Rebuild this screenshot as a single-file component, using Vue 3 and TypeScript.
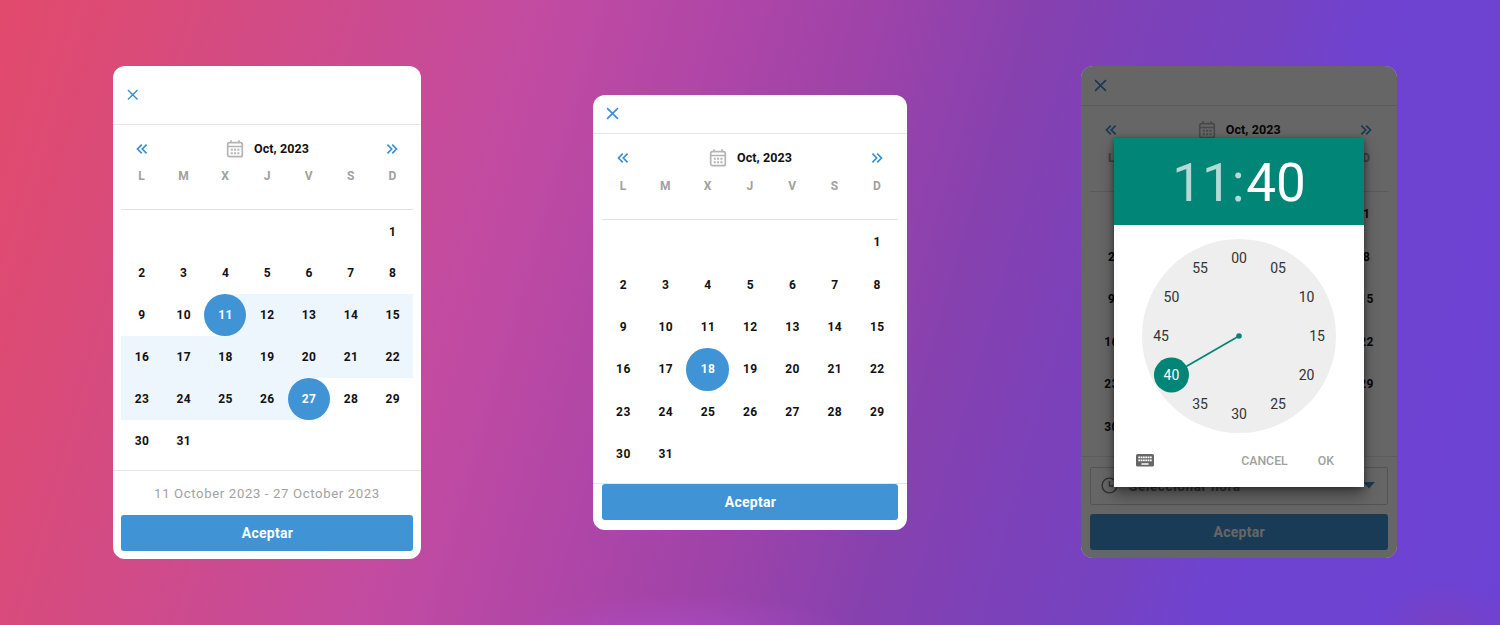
<script setup lang="ts">
interface CalendarCard {
  id: string
  start?: number
  end?: number
  summary?: string
  hour?: boolean
}

const cards: CalendarCard[] = [
  { id: 'range', start: 11, end: 27, summary: '11 October 2023 - 27 October 2023' },
  { id: 'single', start: 18, end: 18 },
  { id: 'time', hour: true },
]

const weekdays = ['L', 'M', 'X', 'J', 'V', 'S', 'D']
// October 2023 starts on a Sunday, so six cells stay blank.
const cells: (number | null)[] = [
  ...Array.from({ length: 6 }, () => null),
  ...Array.from({ length: 31 }, (_, i) => i + 1),
]

function cellClass(card: CalendarCard, day: number | null) {
  const { start, end } = card
  if (day === null || start === undefined || end === undefined) return {}
  const ranged = end > start
  return {
    between: ranged && day > start && day < end,
    first: ranged && day === start,
    last: ranged && day === end,
    picked: day === start || day === end,
  }
}

const minutes = Array.from({ length: 12 }, (_, i) => {
  const angle = (i * Math.PI) / 6
  return {
    label: String(i * 5).padStart(2, '0'),
    x: 97 + 78 * Math.sin(angle),
    y: 97 - 78 * Math.cos(angle),
    active: i === 8,
  }
})
</script>

<template>
  <main class="stage">
    <section v-for="card in cards" :key="card.id" class="card" :class="card.id">
      <header class="top">
        <svg class="close" viewBox="0 0 12 12"><path d="M1 1L11 11M11 1L1 11" /></svg>
      </header>

      <div class="nav">
        <svg class="arrow" viewBox="0 0 12 12"><path d="M5.8 1.6L1.5 6L5.8 10.4M10.6 1.6L6.3 6L10.6 10.4" /></svg>
        <div class="month">
          <svg class="cal" viewBox="0 0 18 18">
            <rect x="1.7" y="2.7" width="14.6" height="14" rx="1.8" />
            <path d="M1.7 6.5H16.3M5 .2V3M13 .2V3" />
            <path class="dots" d="M4.8 9.8H13.5M4.8 13.2H13.5" />
          </svg>
          <span>Oct, 2023</span>
        </div>
        <svg class="arrow" viewBox="0 0 12 12"><path d="M1.4 1.6L5.7 6L1.4 10.4M6.2 1.6L10.5 6L6.2 10.4" /></svg>
      </div>

      <div class="week">
        <span v-for="w in weekdays" :key="w">{{ w }}</span>
      </div>

      <div class="days">
        <div v-for="(day, i) in cells" :key="i" class="cell" :class="cellClass(card, day)">
          <span v-if="day">{{ day }}</span>
        </div>
      </div>

      <footer class="bottom">
        <p v-if="card.summary" class="summary">{{ card.summary }}</p>
        <div v-if="card.hour" class="select">
          <svg class="watch" viewBox="0 0 18 18"><circle cx="9" cy="9" r="7.8" /><path d="M9 4.2V9.6H13" /></svg>
          <span>Seleccionar hora</span>
          <svg class="caret" viewBox="0 0 12 7"><path d="M0 0H12L6 6.5Z" /></svg>
        </div>
        <button class="accept">Aceptar</button>
      </footer>

      <div v-if="card.hour" class="overlay">
        <div class="dialog">
          <div class="clock-head"><span class="dim">11:</span><span>40</span></div>
          <div class="face">
            <svg viewBox="0 0 194 194">
              <circle cx="97" cy="97" r="97" fill="#eeeeee" />
              <path d="M97 97L29.45 136" stroke="#008577" stroke-width="1.7" />
              <circle cx="97" cy="97" r="2.8" fill="#008577" />
              <circle cx="29.45" cy="136" r="17.5" fill="#008577" />
              <text
                v-for="m in minutes"
                :key="m.label"
                :x="m.x"
                :y="m.y + 5"
                :class="{ active: m.active }"
              >{{ m.label }}</text>
            </svg>
          </div>
          <div class="actions">
            <svg class="keys" viewBox="0 0 18 13">
              <rect width="18" height="12.6" rx="1.6" fill="#666" />
              <path d="M2.3 3.4H15.7M2.3 6.4H15.7" stroke="#fff" stroke-width="1.8" stroke-dasharray="1.8 .52" />
              <path d="M5.4 10H12.6" stroke="#fff" stroke-width="1.5" />
            </svg>
            <span class="cancel">CANCEL</span>
            <span>OK</span>
          </div>
        </div>
      </div>
    </section>
  </main>
</template>

<style>
body {
  margin: 0;
}
</style>

<style scoped>
.stage {
  box-sizing: border-box;
  width: 1500px;
  height: 625px;
  overflow: hidden;
  display: flex;
  align-items: flex-start;
  padding-left: 113px;
  font-family: Roboto, "Liberation Sans", sans-serif;
  background:
    radial-gradient(ellipse 170px 36px at 680px 630px, rgba(176, 80, 205, 0.5), transparent),
    radial-gradient(ellipse 70px 50px at 1445px 630px, rgba(132, 64, 176, 0.5), transparent),
    linear-gradient(106deg, #e24a6c 0%, #da4b78 9%, #ce4b8c 20%, #c24ba1 32.5%, #b046a7 43%, #9f43a9 52%, #8641af 62%, #7b41ba 70%, #7642c0 76%, #6f43d0 82%, #6c42d4 100%);
}
.card {
  position: relative;
  box-sizing: border-box;
  flex: none;
  overflow: hidden;
  display: flex;
  flex-direction: column;
  background: #fff;
  border-radius: 12px;
}
.range {
  --cell: 41.8px;
  --row: 41.8px;
  --side: 7.7px;
  width: 308px;
  height: 493px;
  margin-top: 66px;
}
.single {
  --cell: 42.3px;
  --row: 42.4px;
  --side: 8.9px;
  width: 314px;
  height: 435px;
  margin: 95px 0 0 172px;
}
.time {
  --cell: 42.5px;
  --row: 42.5px;
  --side: 9px;
  width: 315.5px;
  height: 492px;
  margin: 66px 0 0 174px;
}
.time {
  background: #666;
}
.top,
.nav,
.week,
.days,
.bottom {
  background: #fff;
}
.top {
  box-sizing: border-box;
  flex: none;
  display: flex;
  align-items: center;
  height: 39px;
  padding-left: 13px;
  border-bottom: 1px solid #e4e6e8;
}
.single .top {
  padding-bottom: 1px;
}
.range .top {
  height: 59px;
  padding-left: 14px;
}
.time .top {
  height: 40px;
}
.close {
  width: 13px;
  height: 13px;
  fill: none;
  stroke: #3b8fd3;
  stroke-width: 1.5;
}
.range .close {
  width: 11.5px;
  height: 11.5px;
}
.nav {
  flex: none;
  display: flex;
  align-items: center;
  justify-content: space-between;
  height: 47px;
  padding: 0 calc(var(--side) + 15px) 0 calc(var(--side) + 15px);
}
.arrow {
  width: 12px;
  height: 12px;
  fill: none;
  stroke: #3b8fd3;
  stroke-width: 1.7;
}
.month {
  display: flex;
  align-items: center;
  gap: 10px;
  padding-left: 1px;
  font-size: 12.5px;
  font-weight: 700;
  color: #111;
  letter-spacing: 0.1px;
}
.cal {
  width: 18px;
  height: 18px;
  fill: none;
  stroke: #b4b4b4;
  stroke-width: 1.7;
}
.cal .dots {
  stroke-width: 2;
  stroke-dasharray: 2 1.3;
}
.week {
  box-sizing: border-box;
  flex: none;
  display: grid;
  grid-template-columns: repeat(7, var(--cell));
  height: 42px;
  margin: -3px var(--side) 0;
  padding-top: 1px;
  border-bottom: 1px solid #e0e2e4;
  font-size: 12px;
  font-weight: 700;
  line-height: 14px;
  text-align: center;
  color: #a0a0a0;
}
.range .week {
  height: 41px;
  padding-top: 0;
}
.days {
  flex: none;
  display: grid;
  grid-template-columns: repeat(7, var(--cell));
  grid-auto-rows: var(--row);
  margin: 1px var(--side) 0;
}
.range .days {
  margin-top: 0.7px;
}
.time .top,
.time .nav,
.time .week,
.time .days,
.time .bottom,
.range > *,
.single > * {
  background: transparent;
}
.time {
  background: #fff;
}
.cell {
  display: flex;
  align-items: center;
  justify-content: center;
  font-size: 12px;
  font-weight: 700;
  letter-spacing: 0.4px;
  color: #111;
}
.cell span {
  box-sizing: border-box;
  display: flex;
  align-items: center;
  justify-content: center;
  width: 100%;
  height: 100%;
  padding-left: 0.7px;
}
.between {
  background: #edf6fd;
}
.first {
  background: linear-gradient(90deg, transparent 50%, #edf6fd 50%);
}
.last {
  background: linear-gradient(90deg, #edf6fd 50%, transparent 50%);
}
.picked span {
  color: #fff;
  background: #4094d6;
  border-radius: 50%;
}
.bottom {
  flex: none;
  display: flex;
  flex-direction: column;
  margin-top: 8px;
  border-top: 1px solid #e4e6e8;
  padding: 0 var(--side);
}
.range .bottom {
  margin-top: 8.5px;
}
.summary {
  margin: 0;
  height: 44px;
  line-height: 45px;
  font-size: 13.2px;
  letter-spacing: 0.62px;
  text-align: center;
  color: #a2a2a2;
}
.accept {
  height: 36px;
  padding: 0 0 0 1px;
  border: 0;
  border-radius: 3px;
  background: #4094d6;
  color: #fff;
  font: 700 14px Roboto, "Liberation Sans", sans-serif;
  letter-spacing: 0.3px;
}
.select {
  box-sizing: border-box;
  display: flex;
  align-items: center;
  height: 38px;
  margin: 9.5px 0 9px;
  padding: 0 12px 0 10px;
  border: 1px solid #d0d0d0;
  border-radius: 2px;
  font-size: 13.5px;
  font-weight: 700;
  letter-spacing: 0.6px;
  color: #777;
}
.watch {
  width: 17px;
  height: 17px;
  margin-right: 11px;
  fill: none;
  stroke: #777;
  stroke-width: 1.5;
}
.caret {
  width: 12px;
  height: 7px;
  margin-left: auto;
  fill: #4094d6;
}
.overlay {
  position: absolute;
  inset: 0;
  display: flex;
  align-items: flex-start;
  padding: 72px 0 0 33px;
  background: rgba(0, 0, 0, 0.6);
}
.dialog {
  width: 250px;
  height: 349px;
  background: #fff;
  box-shadow: 0 9px 14px rgba(0, 0, 0, 0.35), 0 1px 6px rgba(0, 0, 0, 0.4);
}
.clock-head {
  display: flex;
  justify-content: center;
  height: 86.5px;
  line-height: 90px;
  font-size: 53px;
  color: #fff;
  background: #008577;
}
.dim {
  margin-right: 1.5px;
  color: #b0dbd6;
}
.face {
  width: 194px;
  height: 194px;
  margin: 14.5px 0 0 28px;
}
.face svg {
  display: block;
  width: 194px;
  height: 194px;
}
.face text {
  font-size: 14px;
  text-anchor: middle;
  fill: #333;
}
.face text.active {
  fill: #fff;
}
.actions {
  display: flex;
  align-items: center;
  height: 55px;
  padding: 0 30px 0 22px;
  font-size: 12.3px;
  font-weight: 500;
  color: #a0a0a0;
}
.keys {
  width: 18px;
  height: 13px;
}
.cancel {
  margin: 0 30px 0 auto;
}
</style>
